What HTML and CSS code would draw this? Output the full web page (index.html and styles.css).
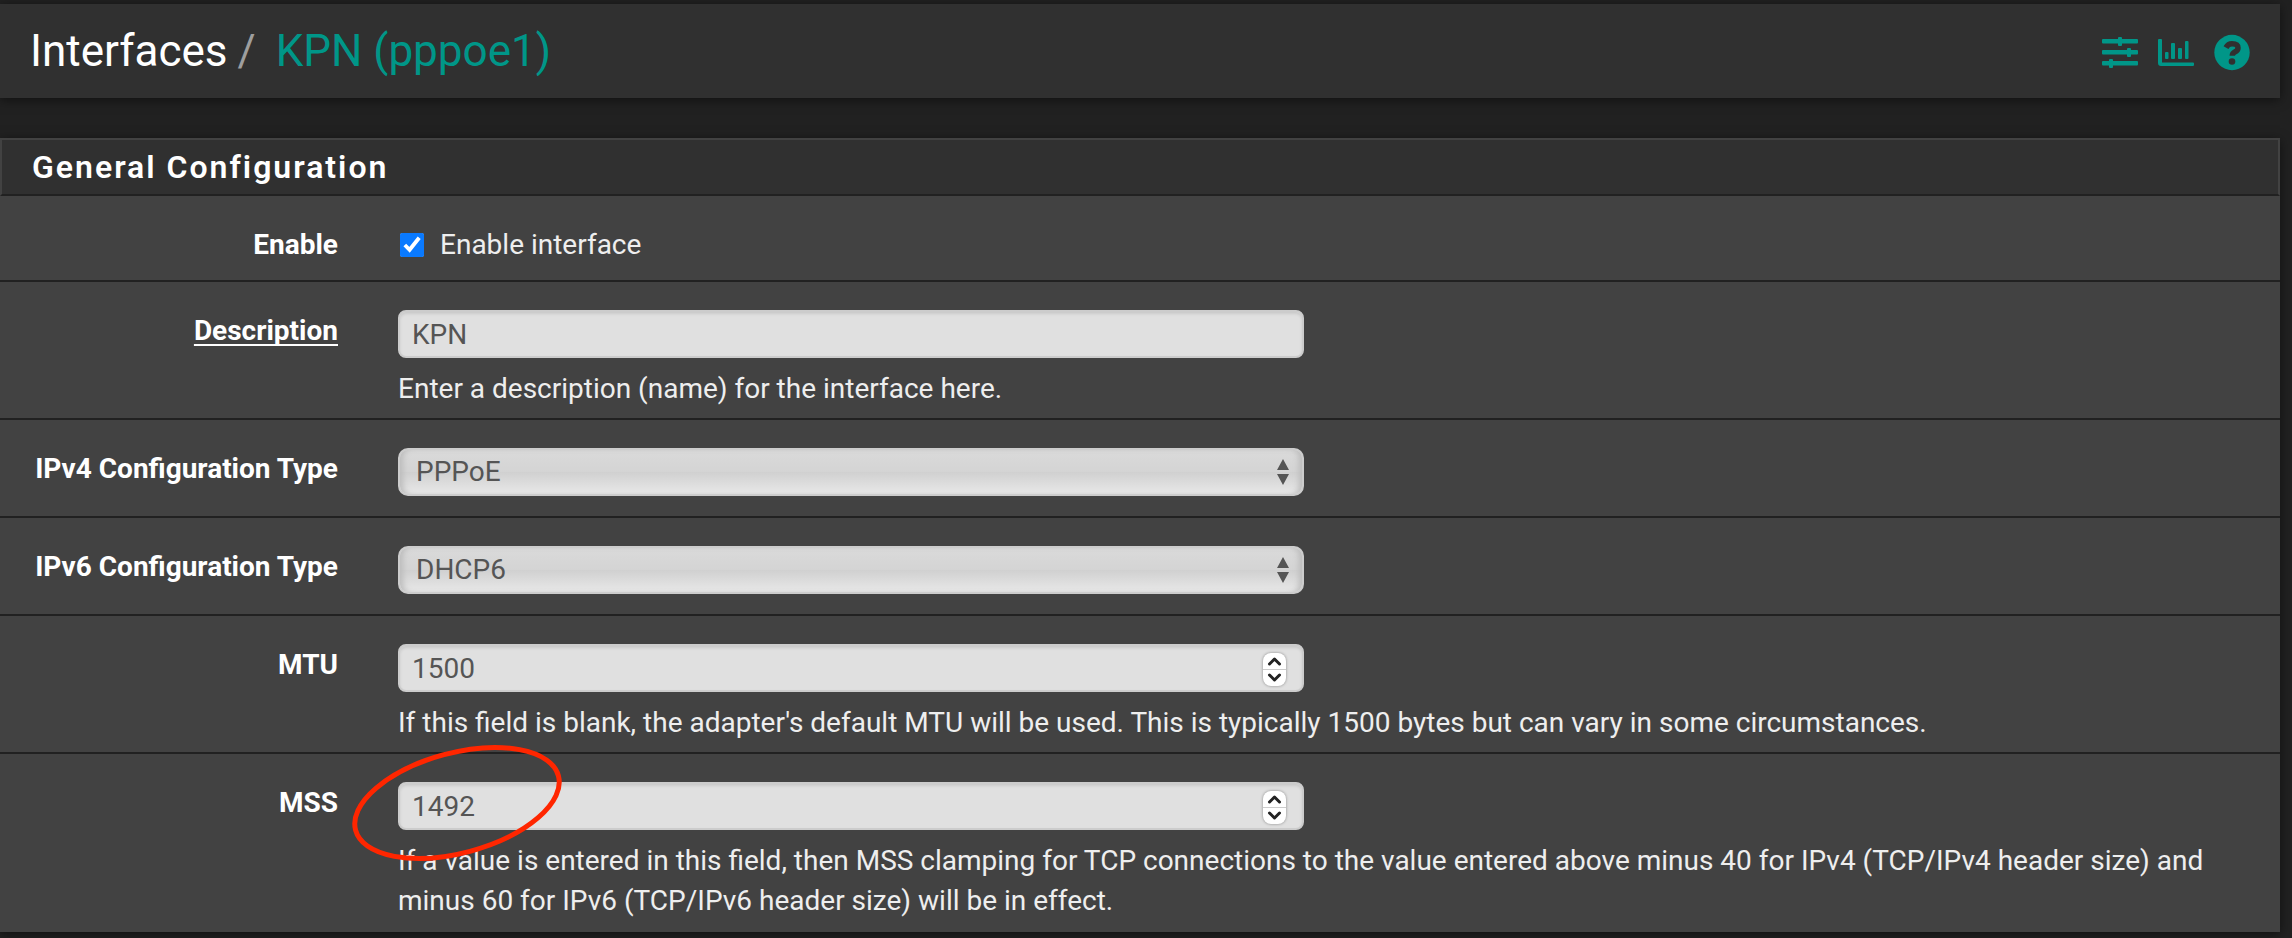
FILE: index.html
```html
<!DOCTYPE html>
<html lang="en">
<head>
<meta charset="utf-8">
<title>Interfaces / KPN (pppoe1)</title>
<link rel="stylesheet" href="styles.css">
</head>
<body>
<header class="page-header">
  <h1 class="breadcrumb">
    <a class="crumb" href="#">Interfaces</a>
    <span class="crumb-separator">/</span>
    <a class="crumb crumb-current" href="#">KPN (pppoe1)</a>
  </h1>
  <nav class="header-actions">
    <a href="#" aria-label="Related settings">
      <svg class="icon" viewBox="0 0 36 36" fill="currentColor">
        <rect x="0" y="4" width="36" height="4.500" rx="1"/><rect x="16" y="2" width="4" height="9" rx="1"/>
        <rect x="0" y="15" width="36" height="4.500" rx="1"/><rect x="25" y="13" width="4" height="9" rx="1"/>
        <rect x="0" y="26" width="36" height="4.500" rx="1"/><rect x="7" y="24" width="4" height="9" rx="1"/>
      </svg>
    </a>
    <a href="#" aria-label="Status graphs">
      <svg class="icon" viewBox="0 0 36 36" fill="currentColor">
        <path d="M1 4h2q1 0 1 1v22.500h31q1 0 1 1v1.500q0 1-1 1H3q-3 0-3-3V5q0-1 1-1z"/>
        <rect x="7" y="17" width="3.500" height="7" rx="1"/><rect x="13" y="8" width="4" height="16" rx="1"/>
        <rect x="20" y="13" width="4" height="11" rx="1"/><rect x="27" y="6" width="3.500" height="18" rx="1"/>
      </svg>
    </a>
    <a href="#" aria-label="Help">
      <svg class="icon" viewBox="0 0 36 36">
        <circle cx="18" cy="17.500" r="17.700" fill="currentColor"/>
        <path d="M12 12.600Q14 8.800 18 8.800Q24 8.800 24 13Q24 15.400 20.800 17Q18.300 18.300 18.300 20.700" fill="none" stroke="#303030" stroke-width="5.500"/>
        <circle cx="18" cy="26.500" r="3.300" fill="#303030"/>
      </svg>
    </a>
  </nav>
</header>

<form class="panel">
  <h2 class="panel-heading">General Configuration</h2>

  <div class="form-row">
    <label class="form-label" for="enable">Enable</label>
    <div class="form-content">
      <label class="check"><input id="enable" class="checkbox" type="checkbox" checked>Enable interface</label>
    </div>
  </div>

  <div class="form-row">
    <label class="form-label" for="descr"><span class="required">Description</span></label>
    <div class="form-content">
      <div class="field"><input id="descr" class="control" type="text" value="KPN"></div>
      <p class="help">Enter a description (name) for the interface here.</p>
    </div>
  </div>

  <div class="form-row">
    <label class="form-label" for="type4">IPv4 Configuration Type</label>
    <div class="form-content">
      <div class="field">
        <select id="type4" class="control select"><option>PPPoE</option></select>
        <svg class="select-arrows" viewBox="0 0 14 26" aria-hidden="true"><path d="M7 0l6 11H1zM1 15h12L7 26z"/></svg>
      </div>
    </div>
  </div>

  <div class="form-row">
    <label class="form-label" for="type6">IPv6 Configuration Type</label>
    <div class="form-content">
      <div class="field">
        <select id="type6" class="control select"><option>DHCP6</option></select>
        <svg class="select-arrows" viewBox="0 0 14 26" aria-hidden="true"><path d="M7 0l6 11H1zM1 15h12L7 26z"/></svg>
      </div>
    </div>
  </div>

  <div class="form-row">
    <label class="form-label" for="mtu">MTU</label>
    <div class="form-content">
      <div class="field">
        <input id="mtu" class="control" type="number" value="1500">
        <div class="stepper">
          <button class="step" type="button" aria-label="Increase MTU"><svg viewBox="0 0 22 16"><path d="M6 11l5-5 5 5"/></svg></button>
          <button class="step" type="button" aria-label="Decrease MTU"><svg viewBox="0 0 22 16"><path d="M6 5l5 5 5-5"/></svg></button>
        </div>
      </div>
      <p class="help">If this field is blank, the adapter's default MTU will be used. This is typically 1500 bytes but can vary in some circumstances.</p>
    </div>
  </div>

  <div class="form-row">
    <label class="form-label" for="mss">MSS</label>
    <div class="form-content">
      <div class="field">
        <input id="mss" class="control" type="number" value="1492">
        <div class="stepper">
          <button class="step" type="button" aria-label="Increase MSS"><svg viewBox="0 0 22 16"><path d="M6 11l5-5 5 5"/></svg></button>
          <button class="step" type="button" aria-label="Decrease MSS"><svg viewBox="0 0 22 16"><path d="M6 5l5 5 5-5"/></svg></button>
        </div>
        <svg class="marker" viewBox="0 0 210 118" aria-hidden="true"><ellipse cx="105" cy="59" rx="105" ry="50" transform="rotate(-15 105 59)"/></svg>
      </div>
      <p class="help">If a value is entered in this field, then MSS clamping for TCP connections to the value entered above minus 40 for IPv4 (TCP/IPv4 header size) and minus 60 for IPv6 (TCP/IPv6 header size) will be in effect.</p>
    </div>
  </div>
</form>
</body>
</html>
```
FILE: styles.css
```css
* {
  box-sizing: border-box;
}

body {
  margin: 0;
  padding: 4px 12px 6px 0;
  background: #212121;
  color: #eeeeee;
  font-family: Roboto, "Liberation Sans", sans-serif;
  font-size: 28px;
  line-height: 40px;
}

.page-header {
  display: flex;
  align-items: center;
  justify-content: space-between;
  padding: 20px 30px;
  background: #303030;
  box-shadow: 0 2px 10px rgba(0, 0, 0, 0.5);
}

.breadcrumb {
  display: flex;
  margin: 0;
  font-size: 44px;
  font-weight: 400;
  line-height: 54px;
}

.crumb {
  color: #ffffff;
  text-decoration: none;
}

.crumb-separator {
  padding: 0 20px 0 10px;
  color: #9e9e9e;
}

.crumb-current {
  color: #009688;
}

.header-actions {
  display: flex;
  gap: 20px;
  padding-top: 4px;
}

.header-actions a {
  display: flex;
  color: #009688;
}

.icon {
  width: 36px;
  height: 36px;
  overflow: visible;
}

.panel {
  margin-top: 40px;
  background: #424242;
  box-shadow: 0 2px 10px rgba(0, 0, 0, 0.5);
}

.panel-heading {
  margin: 0;
  padding: 7px 30px;
  border: 2px solid #424242;
  border-bottom-color: #212121;
  background: #303030;
  color: #ffffff;
  font-size: 32px;
  font-weight: 600;
  letter-spacing: 2px;
}

.form-row {
  display: grid;
  grid-template-columns: 338px minmax(0, 1fr);
  column-gap: 60px;
  padding: 28px 34px 9px 0;
  border-bottom: 2px solid #212121;
}

.form-row:last-child {
  padding-bottom: 11px;
  border-bottom: 0;
}

.form-label {
  padding-top: 1px;
  color: #ffffff;
  font-weight: 700;
  text-align: right;
}

.required {
  text-decoration: underline;
  text-decoration-thickness: 2px;
  text-decoration-skip-ink: none;
  text-underline-offset: 4px;
}

.check {
  display: flex;
  align-items: center;
  padding-top: 1px;
  margin-bottom: 6px;
}

.checkbox {
  width: 24px;
  height: 24px;
  margin: 0 16px 0 2px;
  accent-color: #0a7aff;
}

.field {
  position: relative;
  width: 49%;
  margin-bottom: 11px;
}

.control {
  display: block;
  width: 100%;
  height: 48px;
  margin: 0;
  padding: 0 12px;
  border: 2px solid #cccccc;
  border-radius: 8px;
  background: #e0e0e0;
  box-shadow: inset 0 2px 3px rgba(0, 0, 0, 0.1);
  color: #555555;
  font: inherit;
  appearance: none;
}

.control[type="number"] {
  appearance: textfield;
}

.select {
  padding: 0 16px;
  border-radius: 10px;
  background: linear-gradient(#dadada, #d4d4d4 50%, #d0d0d0 50%, #e8e8e8);
  box-shadow: inset 6px 0 6px -3px #bbbbbb, inset -6px 0 6px -3px #bbbbbb;
}

.select-arrows {
  position: absolute;
  top: 11px;
  right: 14px;
  width: 14px;
  height: 26px;
  fill: #555555;
  pointer-events: none;
}

.stepper {
  position: absolute;
  top: 9px;
  right: 18px;
  display: flex;
  flex-direction: column;
  width: 23px;
  border-radius: 8px;
  background: #ffffff;
  box-shadow: 0 0 3px rgba(0, 0, 0, 0.4);
}

.step {
  display: flex;
  height: 16px;
  padding: 0;
  border: 0;
  background: none;
}

.step + .step {
  height: 17px;
  border-top: 1px solid #cccccc;
}

.step svg {
  width: 100%;
  height: 16px;
  fill: none;
  stroke: #222222;
  stroke-width: 3;
  stroke-linecap: round;
  stroke-linejoin: round;
}

.marker {
  position: absolute;
  top: -38px;
  left: -46px;
  width: 210px;
  height: 118px;
  overflow: visible;
  fill: none;
  stroke: #ff2600;
  stroke-width: 5;
  pointer-events: none;
}

.help {
  margin: 0;
}
```
